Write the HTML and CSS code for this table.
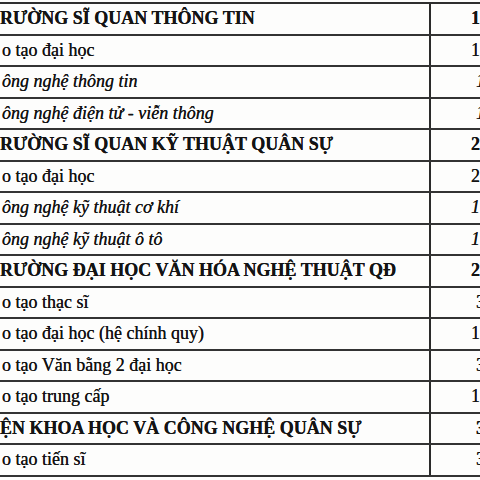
FILE: index.html
```html
<!DOCTYPE html>
<html lang="vi">
<head>
<meta charset="utf-8">
<title>Bảng chỉ tiêu</title>
<link rel="stylesheet" href="styles.css">
</head>
<body>
<div class="sheet">
  <div class="row head"><div class="name"><span class="t">RƯỜNG SĨ QUAN THÔNG TIN</span></div><div class="num"><span class="t">1</span></div></div>
  <div class="row"><div class="name"><span class="t">o tạo đại học</span></div><div class="num"><span class="t">1</span></div></div>
  <div class="row it"><div class="name"><span class="t">ông nghệ thông tin</span></div><div class="num far"><span class="t">1</span></div></div>
  <div class="row it"><div class="name"><span class="t">ông nghệ điện tử - viễn thông</span></div><div class="num far"><span class="t">1</span></div></div>
  <div class="row head"><div class="name"><span class="t">RƯỜNG SĨ QUAN KỸ THUẬT QUÂN SỰ</span></div><div class="num"><span class="t">2</span></div></div>
  <div class="row"><div class="name"><span class="t">o tạo đại học</span></div><div class="num"><span class="t">2</span></div></div>
  <div class="row it"><div class="name"><span class="t">ông nghệ kỹ thuật cơ khí</span></div><div class="num"><span class="t">1</span></div></div>
  <div class="row it"><div class="name"><span class="t">ông nghệ kỹ thuật ô tô</span></div><div class="num"><span class="t">1</span></div></div>
  <div class="row head"><div class="name"><span class="t">RƯỜNG ĐẠI HỌC VĂN HÓA NGHỆ THUẬT QĐ</span></div><div class="num"><span class="t">2</span></div></div>
  <div class="row"><div class="name"><span class="t">o tạo thạc sĩ</span></div><div class="num far"><span class="t">3</span></div></div>
  <div class="row"><div class="name"><span class="t">o tạo đại học (hệ chính quy)</span></div><div class="num"><span class="t">1</span></div></div>
  <div class="row"><div class="name"><span class="t">o tạo Văn bằng 2 đại học</span></div><div class="num far"><span class="t">3</span></div></div>
  <div class="row"><div class="name"><span class="t">o tạo trung cấp</span></div><div class="num"><span class="t">1</span></div></div>
  <div class="row head"><div class="name"><span class="t">ỆN KHOA HỌC VÀ CÔNG NGHỆ QUÂN SỰ</span></div><div class="num far"><span class="t">3</span></div></div>
  <div class="row"><div class="name"><span class="t">o tạo tiến sĩ</span></div><div class="num far"><span class="t">3</span></div></div>
</div>
</body>
</html>
```

FILE: styles.css
```css
html, body {
  margin: 0;
  padding: 0;
  background: #fdfdfc;
  overflow: hidden;
}
body {
  width: 480px;
  height: 480px;
  font-family: "Liberation Serif", "Times New Roman", serif;
  font-size: 18px;
  color: #141414;
}
.sheet {
  margin-top: 2px;
  width: 540px;
  border-top: 2px solid #2e2e2e;
  display: flex;
  flex-direction: column;
}
.row {
  display: flex;
  height: 31.53px;
  box-sizing: border-box;
  border-bottom: 2px solid #333;
  line-height: 29.5px;
}
.name {
  width: 431px;
  flex: none;
  box-sizing: border-box;
  border-right: 2px solid #2a2a2a;
  padding-left: 2px;
  white-space: nowrap;
  overflow: hidden;
}
.t {
  display: inline-block;
  transform: scaleY(1.08);
  transform-origin: 50% 72%;
  text-shadow: 0 0 0.3px #141414;
}
.head .name {
  font-weight: bold;
  padding-left: 0;
}
.it .name {
  font-style: italic;
  padding-left: 2px;
}
.num {
  flex: 1;
  padding-left: 40px;
  white-space: nowrap;
}
.head .num { font-weight: bold; }
.it .num { font-style: italic; }
.num.far { padding-left: 45px; }
```
